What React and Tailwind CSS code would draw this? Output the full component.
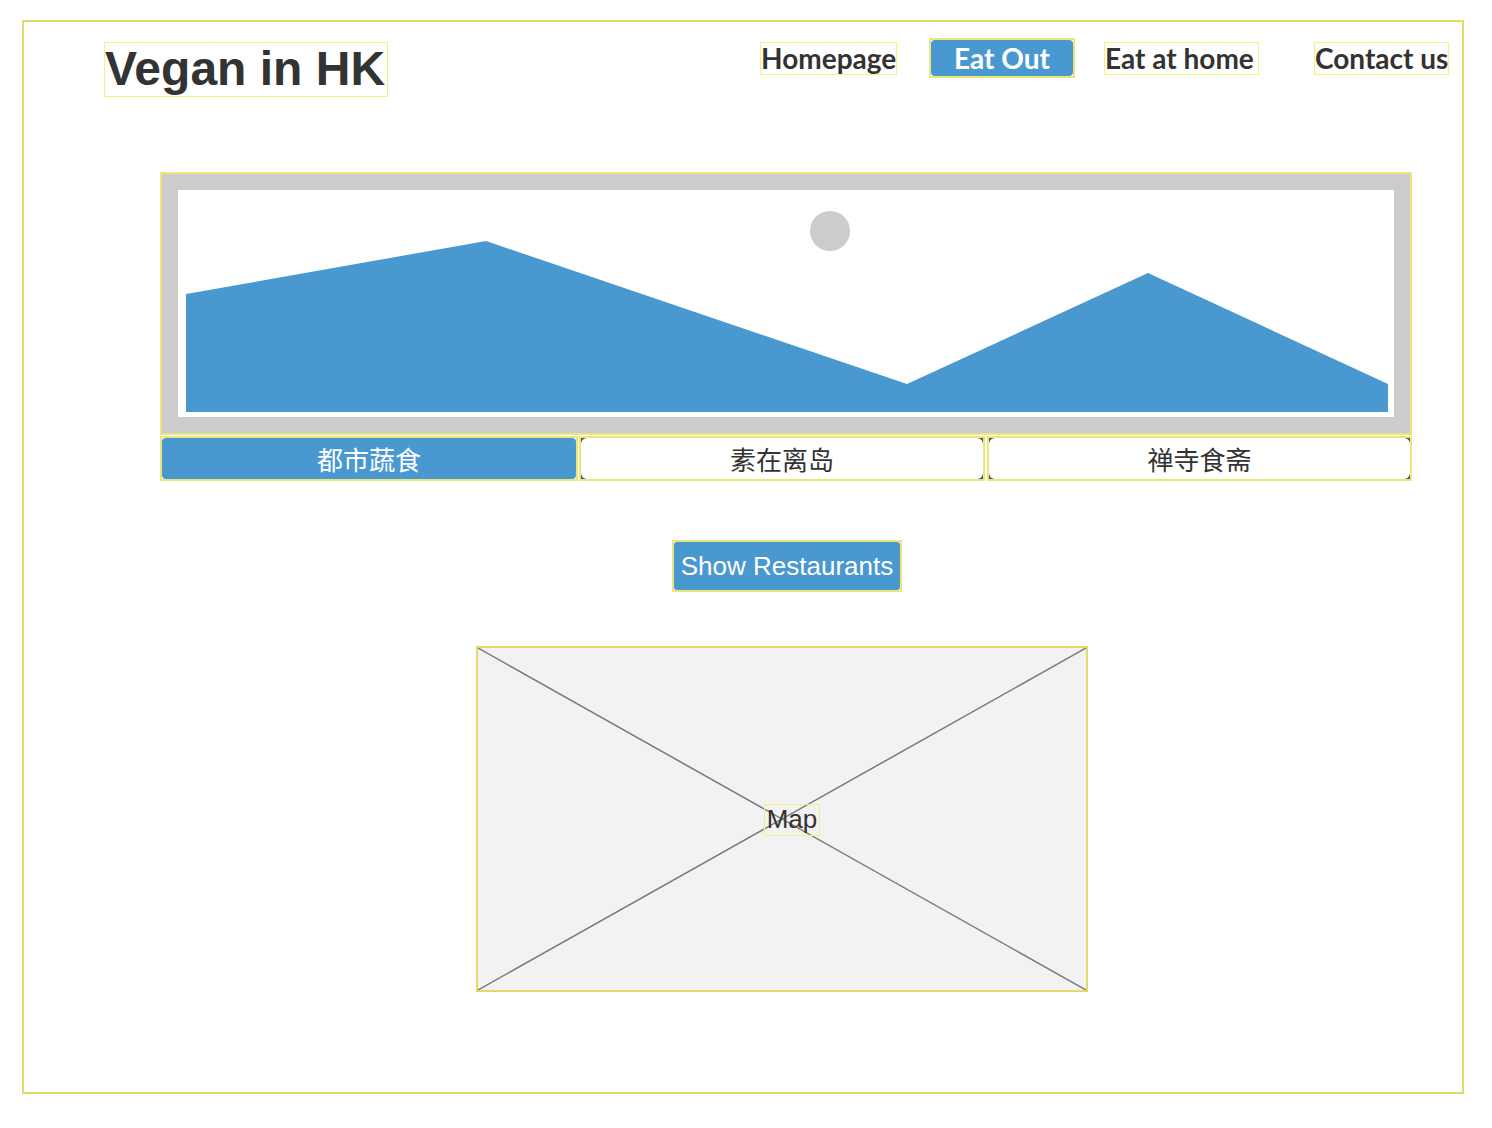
export default function App() {
  const tabs = [
    { label: "都市蔬食", w: "w-[418px]", active: true },
    { label: "素在离岛", w: "w-[406px]", active: false },
    { label: "禅寺食斋", w: "w-[425px]", active: false },
  ];
  return (
    <div className="bg-white min-h-[1128px] pt-[20px] pl-[22px]">
      <div className="w-[1442px] h-[1074px] border-2 border-[#e0dc6c] box-border">
        {/* Header */}
        <div className="flex items-start h-[75px] pt-[16px]">
          <div className="ml-[80px] mt-[4px] h-[55px] w-[284px] border-[1.5px] border-[#f4f086] text-[48px] leading-[52px] font-bold text-[#333333] whitespace-nowrap [font-family:'Liberation_Sans',Arial,sans-serif]">
            Vegan in HK
          </div>
          <div className="flex items-start [font-family:Lato,sans-serif] text-[28px] font-bold text-[#333333]">
            <div className="ml-[372px] mt-[4px] h-[33px] w-[137px] border-[1.5px] border-[#f4f086] leading-[30px] whitespace-nowrap">
              Homepage
            </div>
            <div className="ml-[32px] h-[40px] w-[146px] border-2 border-[#ebe67a] bg-white">
              <div className="h-full w-full rounded-[4px] bg-[#4999d0] text-white text-center leading-[36px] whitespace-nowrap">
                Eat Out
              </div>
            </div>
            <div className="ml-[29px] mt-[4px] h-[33px] w-[155px] border-[1.5px] border-[#f4f086] leading-[30px] whitespace-nowrap">
              Eat at home
            </div>
            <div className="ml-[55px] mt-[4px] h-[33px] w-[135px] border-[1.5px] border-[#f4f086] leading-[30px] whitespace-nowrap">
              Contact us
            </div>
          </div>
        </div>

        {/* Banner image placeholder */}
        <div className="ml-[136px] mt-[75px] w-[1252px] h-[263px] border-2 border-[#ebe67a] bg-[#cccccc] p-[16px]">
          <svg width="1216" height="227" viewBox="0 0 1216 227" className="block bg-white">
            <polygon
              points="8,104 308,51 729,194 970,83 1210,194 1210,222 8,222"
              fill="#4999d0"
            />
            <circle cx="652" cy="41" r="20" fill="#cccccc" />
          </svg>
        </div>

        {/* Tabs */}
        <div className="ml-[136px] mt-[1px] w-[1252px] h-[45px] flex [font-family:'Noto_Sans_CJK_SC',sans-serif] text-[26px]">
          <div className={`${tabs[0].w} h-full border-2 border-[#ebe67a] bg-white`}>
            <div className="h-full w-full rounded-[4px] bg-[#4999d0] text-white flex items-center justify-center">
              {tabs[0].label}
            </div>
          </div>
          <div className={`ml-[1px] ${tabs[1].w} h-full border-2 border-[#ebe67a] bg-[#555555]`}>
            <div className="h-full w-full rounded-[6px] bg-white text-[#333333] flex items-center justify-center">
              {tabs[1].label}
            </div>
          </div>
          <div className={`ml-[2px] ${tabs[2].w} h-full border-2 border-[#ebe67a] bg-[#555555]`}>
            <div className="h-full w-full rounded-[6px] bg-white text-[#333333] flex items-center justify-center">
              {tabs[2].label}
            </div>
          </div>
        </div>

        {/* Show Restaurants button */}
        <div className="ml-[648px] mt-[59px] w-[230px] h-[52px] border-2 border-[#ebe67a] bg-white">
          <div className="h-full w-full rounded-[3px] bg-[#4999d0] text-white text-[26px] leading-[48px] text-center whitespace-nowrap [font-family:'Liberation_Sans',Arial,sans-serif]">
            Show Restaurants
          </div>
        </div>

        {/* Map placeholder */}
        <div className="relative ml-[452px] mt-[54px] w-[612px] h-[346px] border-2 border-[#dedb6c] bg-[#f2f2f2]">
          <svg width="608" height="342" viewBox="0 0 608 342" className="absolute inset-0 block">
            <line x1="0" y1="0" x2="608" y2="342" stroke="#777777" strokeWidth="1.5" />
            <line x1="608" y1="0" x2="0" y2="342" stroke="#777777" strokeWidth="1.5" />
          </svg>
          <div className="absolute left-[286px] top-[156px] w-[56px] h-[32px] border-[1.5px] border-[#f4f086] text-[26px] leading-[29px] text-center text-[#333333] [font-family:'Liberation_Sans',Arial,sans-serif]">
            Map
          </div>
        </div>
      </div>
    </div>
  );
}
